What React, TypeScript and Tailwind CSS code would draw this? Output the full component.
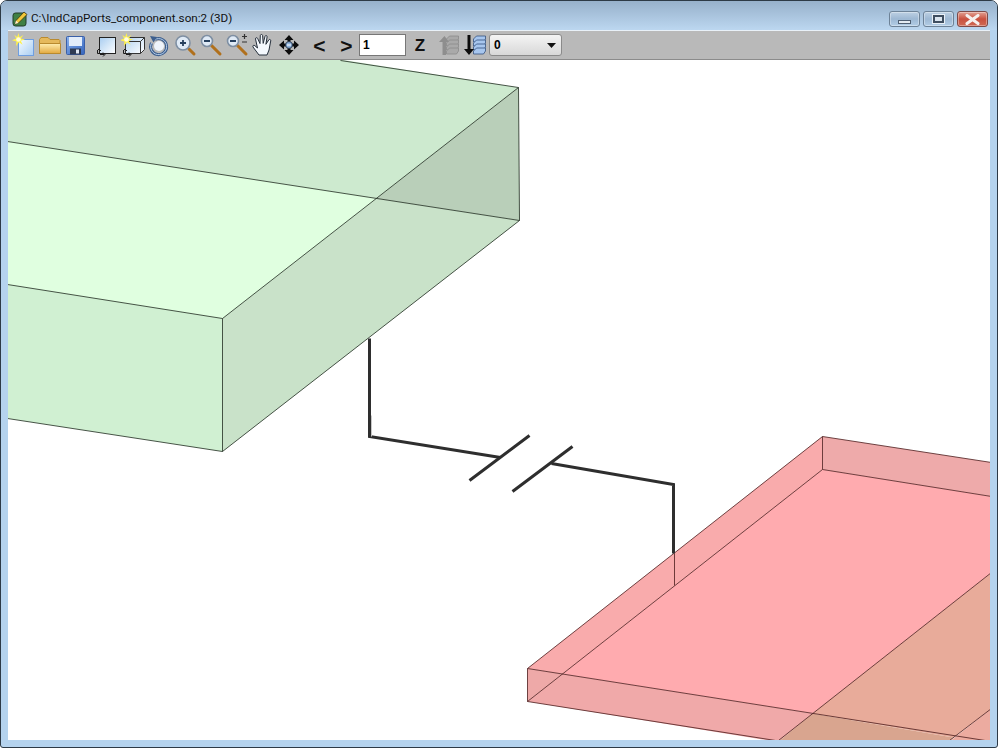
const Star = ({ x = 0, y = 0 }: { x?: number; y?: number }) => (
  <g transform={`translate(${x} ${y})`}>
    <path d="M6.500 0l1 4.200L11.500 2 8.800 5.600l4.200 1-4.200 1.200 1.800 4L7 9.200 4 13l.4-4.500L0 7.200l4.200-1.600L2.200 1.800l3 2.200z" fill="#fff14a" />
    <circle cx="6.500" cy="6.500" r="2.300" fill="#fffde0" />
  </g>
);

const NewIcon = () => (
  <svg width="24" height="24" viewBox="0 0 24 24">
    <defs>
      <linearGradient id="pg" x1="0" y1="0" x2="1" y2="1">
        <stop offset="0" stopColor="#f4fbff" />
        <stop offset="1" stopColor="#a9cdf3" />
      </linearGradient>
    </defs>
    <rect x="6.500" y="6.500" width="15" height="16" fill="url(#pg)" stroke="#6f9ee0" />
    <Star x={0} y={0} />
  </svg>
);

const FolderIcon = () => (
  <svg width="24" height="24" viewBox="0 0 24 24">
    <defs>
      <linearGradient id="fg" x1="0" y1="0" x2="0" y2="1">
        <stop offset="0" stopColor="#ffeeb0" />
        <stop offset="1" stopColor="#e2a83e" />
      </linearGradient>
    </defs>
    <path d="M1.500 20.500V6.500l1.500-2h7l2 2h9l1 1v13z" fill="#e5b95c" stroke="#b98a2e" />
    <path d="M1.500 20.500v-10h21v10z" fill="url(#fg)" stroke="#b98a2e" />
  </svg>
);

const SaveIcon = () => (
  <svg width="24" height="24" viewBox="0 0 24 24">
    <defs>
      <linearGradient id="sg" x1="0" y1="0" x2="1" y2="1">
        <stop offset="0" stopColor="#8ab2ee" />
        <stop offset="1" stopColor="#3565bd" />
      </linearGradient>
    </defs>
    <rect x="2.500" y="3.500" width="18" height="18" rx="1" fill="url(#sg)" stroke="#3a5fa8" />
    <rect x="5" y="4" width="13" height="9" fill="#e3edfa" />
    <rect x="6" y="15.500" width="11" height="6" fill="#2e3a52" />
    <rect x="12" y="16.500" width="3" height="4" fill="#dfe6f2" />
  </svg>
);

const CornerArrows = () => (
  <path d="M3.500 17.500v3h3M3 18l2-2 2 2M6 21.500h4.500M9 19.500l2 2-2 2" fill="none" stroke="#1c1c1c" strokeWidth="1" />
);

const SelectIcon = () => (
  <svg width="24" height="24" viewBox="0 0 24 24">
    <defs>
      <linearGradient id="rg" x1="1" y1="1" x2="0" y2="0">
        <stop offset="0" stopColor="#ffffff" />
        <stop offset="1" stopColor="#a8cdf0" />
      </linearGradient>
    </defs>
    <rect x="4.500" y="4.500" width="16" height="16" fill="url(#rg)" stroke="#222" />
    <g transform="translate(-1 0)"><CornerArrows /></g>
  </svg>
);

const BoxIcon = () => (
  <svg width="24" height="24" viewBox="0 0 24 24">
    <defs>
      <linearGradient id="bg3" x1="1" y1="1" x2="0" y2="0">
        <stop offset="0" stopColor="#ffffff" />
        <stop offset="1" stopColor="#b2d2f1" />
      </linearGradient>
    </defs>
    <path d="M4.500 8.500l4-4h15v12l-4 4h-15z" fill="url(#bg3)" stroke="#333" />
    <path d="M4.500 8.500h15v12M19.500 8.500l4-4" fill="none" stroke="#333" />
    <Star x={-1} y={0} />
    <g transform="translate(-1 0)"><CornerArrows /></g>
  </svg>
);

const RotateIcon = () => (
  <svg width="24" height="24" viewBox="0 0 24 24">
    <circle cx="12" cy="13" r="5" fill="#eef4fb" />
    <path d="M8 6.500A8 8 0 1 1 4.500 10" fill="none" stroke="#3d5f8e" strokeWidth="3" />
    <path d="M8 6.500A8 8 0 1 1 4.500 10" fill="none" stroke="#b7cfe9" strokeWidth="1" />
    <path d="M3 3l7 1-3.500 5.500z" fill="#3d5f8e" />
  </svg>
);

const Mag = ({ mark, small }: { mark: 'plus' | 'minus' | 'both'; small?: boolean }) => {
  const r = small ? 5.5 : 7;
  const c = small ? 8 : 10;
  return (
    <svg width="24" height="24" viewBox="0 0 24 24">
      <path d={`M${c + r - 1} ${c + r - 1}L21 21`} stroke="#b0701c" strokeWidth="3" strokeLinecap="round" />
      <circle cx={c} cy={c} r={r} fill="#dfeaf6" stroke="#7e8fa3" strokeWidth="1.6" />
      <path d={`M${c - 3} ${c}h6`} stroke="#26405e" strokeWidth="1.8" />
      {mark === 'plus' && <path d={`M${c} ${c - 3}v6`} stroke="#26405e" strokeWidth="1.8" />}
      {mark === 'both' && <path d="M17 3.500h5M19.500 1v5M17 9h5" stroke="#333" strokeWidth="1.2" fill="none" />}
    </svg>
  );
};

const HandIcon = () => (
  <svg width="24" height="24" viewBox="0 0 24 24">
    <path
      d="M8 22l-6-8c-.8-1.400 1-2.400 2-1.200l2.500 2.200L4.500 6c-.2-1.500 1.800-1.800 2.200-.4l2.300 5 .3-8c.1-1.500 2.200-1.500 2.300 0l.6 7.800 1.800-7c.4-1.400 2.300-1 2.100.4l-1.200 7.500 2.800-4.300c.8-1.200 2.500-.4 2 1L18 17l-2 5z"
      fill="#f4f8fd"
      stroke="#26303c"
      strokeWidth="1"
    />
  </svg>
);

const MoveIcon = () => (
  <svg width="24" height="24" viewBox="0 0 24 24">
    <path d="M12 2l4.500 5h-3v3.500H17v-3l5 4.500-5 4.500v-3h-3.500V17h3L12 22l-4.500-5h3v-3.500H7v3L2 12l5-4.500v3h3.500V7h-3z" fill="#0c0c0c" />
    <circle cx="12" cy="12" r="3.400" fill="#8fb2da" stroke="#1d2c40" strokeWidth="0.8" />
    <path d="M10 12h4" stroke="#fff" strokeWidth="1" />
  </svg>
);

const StackIcon = ({ up }: { up?: boolean }) => (
  <svg width="24" height="24" viewBox="0 0 24 24">
    {[4, 8, 12, 16].map((y) => (
      <path
        key={y}
        d={`M9.500 ${y + 2}l3-3h9v3l-2 3h-10z`}
        fill={up ? '#a9a9a9' : '#a7c6ee'}
        stroke={up ? '#8a8a8a' : '#33527f'}
        strokeWidth="0.8"
      />
    ))}
    {up ? (
      <path d="M5.500 22V9H2l5.500-6L12 9H9v13z" fill="#8e8e8e" />
    ) : (
      <path d="M3.500 2h3v14H10l-5 6-5-6h3.500z" fill="#0c0c0c" />
    )}
  </svg>
);

const AppIcon = () => (
  <svg width="17" height="17" viewBox="0 0 17 17">
    <rect x="1" y="3" width="13" height="13" rx="2.500" fill="#3f8045" stroke="#223c28" />
    <path d="M3 14l1-3.500L12 2l3 2.500-8.500 8.500z" fill="#f2c83c" stroke="#3b3212" strokeWidth="0.8" />
    <path d="M3 14l1-3.500 2.500 2.500z" fill="#fdf3cf" />
  </svg>
);

const tools = [
  <NewIcon key="new" />,
  <FolderIcon key="open" />,
  <SaveIcon key="save" />,
];

const viewTools = [
  <SelectIcon key="select" />,
  <BoxIcon key="box" />,
  <RotateIcon key="rotate" />,
  <Mag key="in" mark="plus" />,
  <Mag key="out" mark="minus" small />,
  <Mag key="fit" mark="both" small />,
  <HandIcon key="hand" />,
  <MoveIcon key="move" />,
];

const WinButton = ({ kind }: { kind: 'min' | 'max' | 'close' }) => {
  const colors =
    kind === 'close'
      ? 'from-[#e0a093] via-[#c9503f] to-[#cf6a55] border-[#7d4a48]'
      : 'from-[#bdd0e3] via-[#9db8d3] to-[#b2cde6] border-[#6d8297]';
  return (
    <div className={`w-[31px] h-[16px] rounded-[3px] border flex items-center justify-center bg-gradient-to-b shadow-[inset_0_0_0_1px_rgba(255,255,255,0.35)] ${colors}`}>
      {kind === 'min' && <div className="w-[13px] h-[4px] mt-[5px] bg-[#e4ebf2] border border-[#4f5f72]" />}
      {kind === 'max' && <div className="w-[11px] h-[8px] border-2 border-[#3f4e60] bg-[#dbe5ef] outline outline-1 outline-[#e8eff6]" />}
      {kind === 'close' && (
        <svg width="15" height="11" viewBox="0 0 15 11">
          <path d="M2 1.500l11 8M13 1.500l-11 8" stroke="#f5f0ee" strokeWidth="3" strokeLinecap="round" />
        </svg>
      )}
    </div>
  );
};

// model view, drawn in window coordinates
const Scene = () => (
  <svg className="block flex-1 min-h-0 w-full bg-white" viewBox="8 60 982 680">
    <g transform="translate(0.5 0.5)">
      <g stroke="none">
        <path d="M7 59H340L518 87 376 198 7 141z" fill="#cdeacf" />
        <path d="M7 141L376 198 222 318 7 284z" fill="#e0ffe0" />
        <path d="M518 87L519 220 376 198z" fill="#b9cfb9" />
        <path d="M376 198L519 220 222 451V318z" fill="#c9e2c9" />
        <path d="M7 284L222 318V451L7 418z" fill="#d0f0d2" />

        <path d="M822 436L527 668 562 673.500 822 469z" fill="#f9abac" />
        <path d="M822 436L991 462V496L822 469z" fill="#eeaaaa" />
        <path d="M822 469L991 496V572L812 713 562 673.500z" fill="#ffabaf" />
        <path d="M527 668L562 673.500 527 701z" fill="#eea9a8" />
        <path d="M562 673.500L812 713 778 741H775L527 701z" fill="#f0a9a9" />
        <path d="M991 572V708L953 737 812 713z" fill="#e8ab9a" />
        <path d="M812 713L953 737 949 741H778z" fill="#d9a58f" />
        <path d="M991 708V741H949z" fill="#ecaba0" />
      </g>

      <g fill="none" stroke="#1d2a1d" strokeWidth="0.8">
        <path d="M340 60L518 87 519 220 222 451V318L518 87M7 141L519 220M7 284L222 318M7 418L222 451" />
      </g>
      <g fill="none" stroke="#4a1c1c" strokeWidth="0.8">
        <path d="M991 462L822 436 527 668V701L822 469V436M822 469L991 496M527 668L991 741M527 701L775 740" />
        <path d="M991 572L778 740M991 708L949 740M674 553V585" />
      </g>

      <g fill="none" stroke="#2e2e2e" strokeWidth="3">
        <path d="M369 338V436L500 457" />
        <path d="M469 480L529 435M512 491L572 446" />
        <path d="M551 463L673 484V553" />
      </g>
      <path d="M371 415V436" stroke="#c8c8c8" strokeWidth="1" />
    </g>
  </svg>
);

export default function App() {
  return (
    <div className="w-[998px] h-[748px] flex flex-col rounded-t-[7px] rounded-b-[3px] border border-[#2d3a46] bg-[#b5d3ee] overflow-hidden font-['Roboto',sans-serif]">
      {/* title bar */}
      <div className="h-[29px] shrink-0 flex items-start bg-gradient-to-b from-[#97b1cb] to-[#bcd7f0]">
        <div className="flex items-center pl-[11px] pt-[9px] gap-[2px] flex-1">
          <AppIcon />
          <span className="text-[11.7px] leading-[17px] text-[#111]">C:\IndCapPorts_component.son:2 (3D)</span>
        </div>
        <div className="flex gap-[3px] pt-[10px] pr-[9px]">
          <WinButton kind="min" />
          <WinButton kind="max" />
          <WinButton kind="close" />
        </div>
      </div>

      <div className="flex-1 min-h-0 flex flex-col mx-[7px] mb-[7px] border-t border-[#e9f1f8]">
        {/* toolbar */}
        <div className="h-[29px] shrink-0 flex items-center pl-[3px] bg-[#b9b9b9] border-b border-[#8b8b8b]">
          {tools.map((icon) => (
            <div key={icon.key} className="w-[26px] flex justify-center">{icon}</div>
          ))}
          <div className="w-[5px]" />
          {viewTools.map((icon) => (
            <div key={icon.key} className="w-[26px] flex justify-center">{icon}</div>
          ))}
          <span className="w-[27px] ml-[4px] text-center text-[21px] leading-none font-bold font-['Liberation_Sans',sans-serif] text-[#111]">&lt;</span>
          <span className="w-[27px] text-center text-[21px] leading-none font-bold font-['Liberation_Sans',sans-serif] text-[#111]">&gt;</span>
          <input
            readOnly
            value="1"
            className="w-[47px] h-[22px] -ml-[1px] px-[3px] border border-[#777] bg-white text-[12px] font-bold font-['Liberation_Sans',sans-serif] text-black outline-none"
          />
          <span className="w-[28px] text-center text-[17px] leading-none font-bold font-['Liberation_Sans',sans-serif] text-[#111]">Z</span>
          <div className="w-[25px] ml-[2px] flex justify-center"><StackIcon up /></div>
          <div className="w-[25px] ml-[2px] flex justify-center"><StackIcon /></div>
          <div className="w-[73px] h-[22px] ml-[1px] flex items-center justify-between px-[4px] rounded-[3px] border border-[#8a8a8a] bg-gradient-to-b from-[#f4f4f4] to-[#d8d8d8] text-[12px] font-bold font-['Liberation_Sans',sans-serif] text-black">
            <span>0</span>
            <svg width="9" height="5" viewBox="0 0 9 5" className="mr-[1px]"><path d="M0 0h9L4.500 5z" fill="#111" /></svg>
          </div>
        </div>

        <Scene />
      </div>
    </div>
  );
}
